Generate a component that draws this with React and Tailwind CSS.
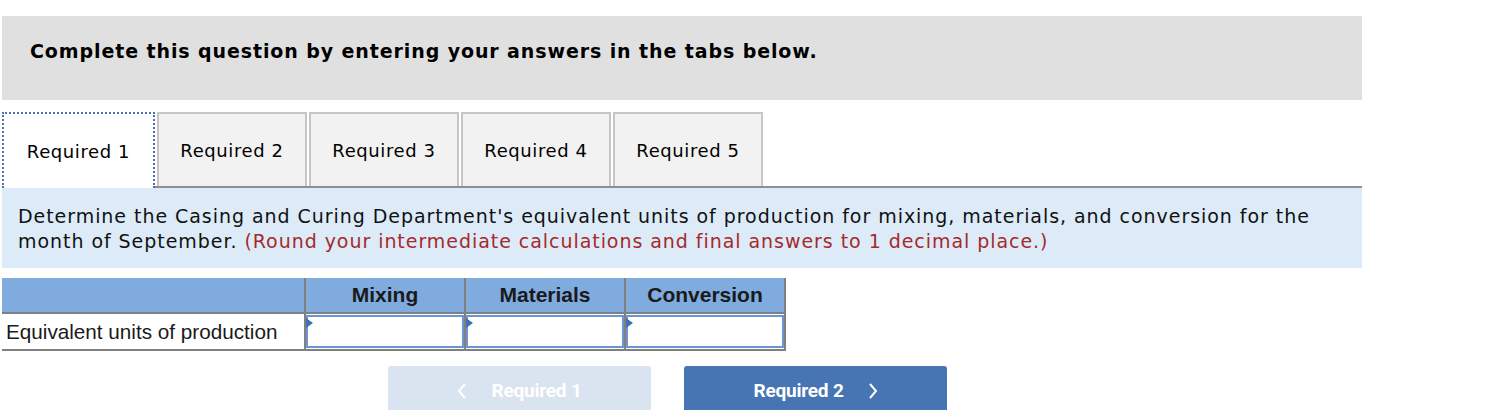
import React from 'react';

const tabs = ['Required 2', 'Required 3', 'Required 4', 'Required 5'];
const cols = ['Mixing', 'Materials', 'Conversion'];

const Chevron = ({ dir }) => (
  <svg width="10" height="16" viewBox="0 0 10 16" fill="none" stroke="currentColor" strokeWidth="2">
    {dir === 'left' ? <path d="M8 1 L2 8 L8 15" /> : <path d="M2 1 L8 8 L2 15" />}
  </svg>
);

const AnswerInput = () => (
  <div className="relative h-[33px] border-2 border-[#6c95d2] bg-white">
    <span className="absolute left-[-2px] top-[1px] h-0 w-0 border-y-[5px] border-l-[7px] border-y-transparent border-l-[#3f6fb6]" />
  </div>
);

export default function App() {
  return (
    <div className="min-h-screen bg-white pl-[2px] pt-[16px]" style={{ fontFamily: '"DejaVu Sans", Verdana, sans-serif' }}>
      <div className="w-[1360px]">
        <div className="h-[84px] bg-[#e0e0e0] pl-[28px] pt-[21px] text-[19px] font-bold tracking-[0.9px] text-black">
          Complete this question by entering your answers in the tabs below.
        </div>

        <div className="mt-[12px] flex h-[76px]">
          <div className="flex w-[153px] items-center justify-center border-2 border-b-0 border-dotted border-[#4a72b0] bg-white text-[18px] tracking-[0.6px] text-black">
            Required 1
          </div>
          <div className="flex flex-1 gap-[2px] border-b-2 border-[#8f8f8f] pl-[2px]">
            {tabs.map((t) => (
              <div
                key={t}
                className="flex w-[150px] items-center justify-center border-2 border-b-0 border-[#c6c6c6] bg-[#f2f2f2] text-[18px] tracking-[0.6px] text-black"
              >
                {t}
              </div>
            ))}
          </div>
        </div>

        <div className="h-[80px] bg-[#ddebf8] px-[16px] pt-[16px] text-[19px] leading-[25px] tracking-[0.95px] text-[#111]">
          Determine the Casing and Curing Department's equivalent units of production for mixing, materials, and conversion for the
          month of September. <span className="text-[#a52a2a]">(Round your intermediate calculations and final answers to 1 decimal place.)</span>
        </div>

        <table className="mt-[10px] border-collapse" style={{ fontFamily: '"Liberation Sans", Arial, sans-serif' }}>
          <thead>
            <tr className="h-[35px] bg-[#80abdf]">
              <th className="w-[303px] border-r-2 border-b-2 border-[#808080]"></th>
              {cols.map((c) => (
                <th key={c} className="w-[160px] border-x-2 border-b-2 border-[#808080] text-[21px] font-bold text-[#1a1a1a]">
                  {c}
                </th>
              ))}
            </tr>
          </thead>
          <tbody>
            <tr className="h-[37px]">
              <td className="border-r-2 border-b-2 border-[#808080] pl-[4px] text-left text-[20.7px] text-[#1a1a1a]">
                Equivalent units of production
              </td>
              {cols.map((c) => (
                <td key={c} className="border-x-2 border-b-2 border-[#808080] p-0">
                  <AnswerInput />
                </td>
              ))}
            </tr>
          </tbody>
        </table>

        <div className="ml-[386px] mt-[15px] flex gap-[33px]" style={{ fontFamily: 'Roboto, "Liberation Sans", sans-serif' }}>
          <div className="flex h-[50px] w-[263px] items-center justify-center gap-[24px] rounded-t-[3px] bg-[#d9e4f0] text-[19px] font-bold tracking-[-0.2px] text-white">
            <Chevron dir="left" />
            <span>Required 1</span>
          </div>
          <div className="flex h-[50px] w-[263px] items-center justify-center gap-[24px] rounded-t-[3px] bg-[#4775b3] text-[19px] font-bold tracking-[-0.2px] text-white">
            <span>Required 2</span>
            <Chevron dir="right" />
          </div>
        </div>
      </div>
    </div>
  );
}
